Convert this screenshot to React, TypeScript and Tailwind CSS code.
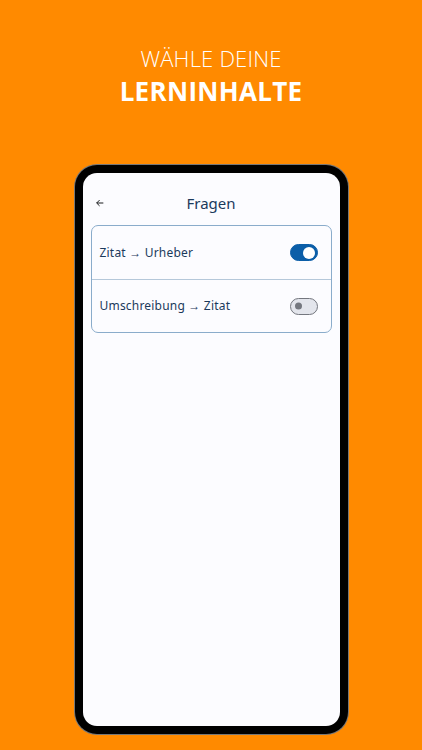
import { useState } from "react";

// Toggle in the style of Material 3 switches
function Toggle({ on, onChange }: { on: boolean; onChange: () => void }) {
  return (
    <button
      onClick={onChange}
      className={`relative w-[28px] h-[17px] rounded-full border shrink-0 ${
        on ? "bg-[#0b5ea8] border-[#0b5ea8]" : "bg-[#e3e5ec] border-[#74777f]"
      }`}
    >
      <span
        className={`absolute top-1/2 -translate-y-1/2 rounded-full ${
          on ? "right-[2px] w-[12px] h-[12px] bg-white" : "left-[4px] w-[7px] h-[7px] bg-[#74777f]"
        }`}
      />
    </button>
  );
}

const ROWS = [
  { id: "zu", label: "Zitat → Urheber" },
  { id: "uz", label: "Umschreibung → Zitat" },
];

export default function App() {
  const [state, setState] = useState<Record<string, boolean>>({ zu: true, uz: false });
  return (
    <div
      className="w-[422px] h-[750px] bg-[#ff8a00] flex flex-col items-center overflow-hidden"
      style={{ fontFamily: '"Noto Sans", "Open Sans", sans-serif' }}
    >
      <div className="pt-[47px] flex flex-col items-center text-white leading-none">
        <div className="text-[22px] font-light tracking-[0.2px]" style={{ fontFamily: '"Open Sans", sans-serif' }}>WÄHLE DEINE</div>
        <div className="text-[26px] font-bold mt-[9px] tracking-[0.3px]" style={{ fontFamily: '"Open Sans", sans-serif' }}>LERNINHALTE</div>
      </div>

      <div className="mt-[61px] w-[273px] h-[569px] rounded-[22px] bg-black p-[8px] ring-1 ring-[#777]">
        <div className="w-full h-full rounded-[14px] bg-[#fcfcff] flex flex-col px-[8px]">
          <div className="h-[52px] flex items-center relative shrink-0 pt-[8px]">
            <svg className="absolute left-[4px] top-[25px]" width="10" height="10" viewBox="0 0 24 24" fill="none" stroke="#1a1c1e" strokeWidth="2.4">
              <path d="M20 12H4M11 5l-7 7 7 7" />
            </svg>
            <div className="flex-1 text-center text-[15px] text-[#1b3a5c]">Fragen</div>
          </div>
          <div className="border border-[#8aaccb] rounded-[7px] flex flex-col">
            {ROWS.map((r, i) => (
              <div
                key={r.id}
                className={`h-[53px] flex items-center justify-between pl-[8px] pr-[13px] ${
                  i > 0 ? "border-t border-[#b5c8da]" : ""
                }`}
              >
                <span className="text-[12px] text-[#1b3a5c] tracking-[0.2px]">{r.label}</span>
                <Toggle on={state[r.id]} onChange={() => setState(s => ({ ...s, [r.id]: !s[r.id] }))} />
              </div>
            ))}
          </div>
        </div>
      </div>
    </div>
  );
}
